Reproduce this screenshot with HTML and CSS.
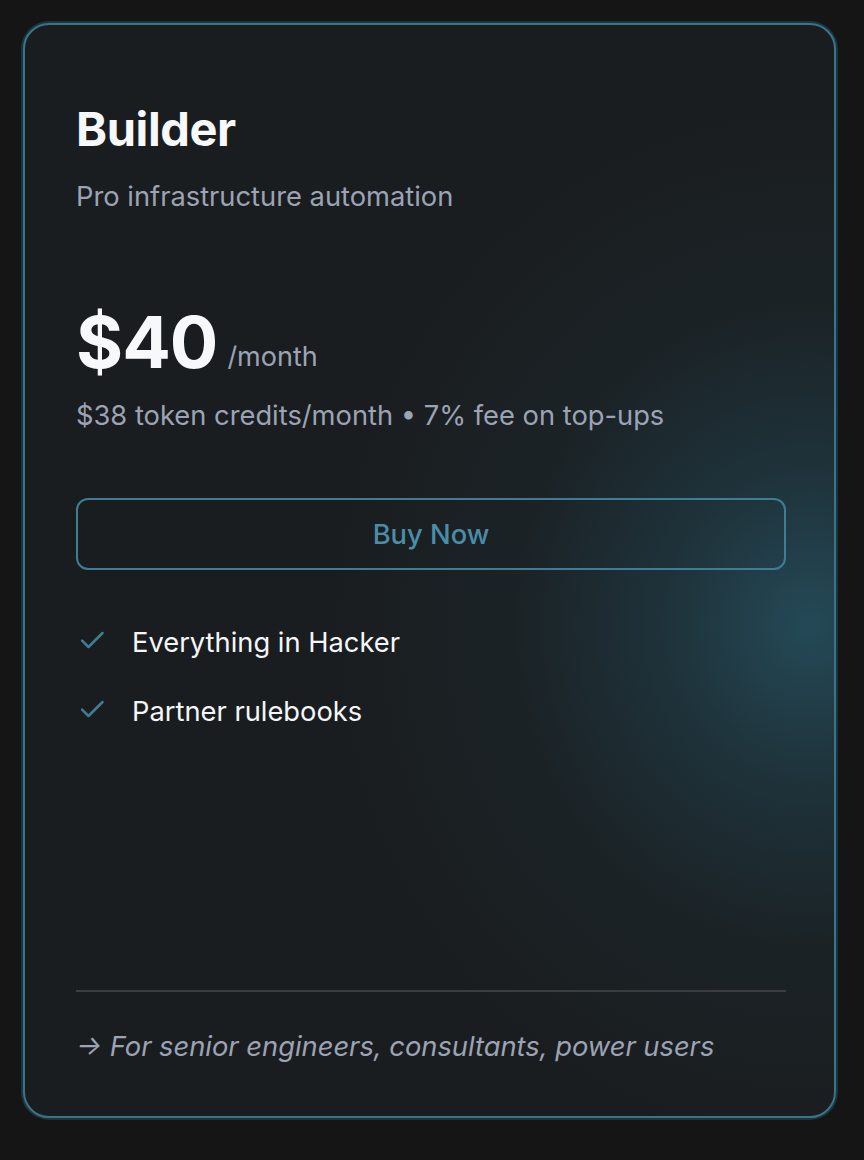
FILE: index.html
```html
<!DOCTYPE html>
<html lang="en">
<head>
<meta charset="utf-8">
<title>Builder plan</title>
<link rel="stylesheet" href="styles.css">
</head>
<body>
<div class="page">
  <section class="card">
    <h2 class="plan-name">Builder</h2>
    <p class="plan-desc">Pro infrastructure automation</p>
    <div class="price-row">
      <span class="price">$40</span>
      <span class="period">/month</span>
    </div>
    <p class="credits">$38 token credits/month • 7% fee on top-ups</p>
    <button class="buy">Buy Now</button>
    <ul class="features">
      <li class="feature">
        <svg class="check" viewBox="0 0 24 24" width="28" height="28" aria-hidden="true"><path d="M3.5 12.5 L9 18 L21 6" fill="none" stroke="currentColor" stroke-width="2.2" stroke-linecap="round" stroke-linejoin="round"/></svg>
        <span>Everything in Hacker</span>
      </li>
      <li class="feature">
        <svg class="check" viewBox="0 0 24 24" width="28" height="28" aria-hidden="true"><path d="M3.5 12.5 L9 18 L21 6" fill="none" stroke="currentColor" stroke-width="2.2" stroke-linecap="round" stroke-linejoin="round"/></svg>
        <span>Partner rulebooks</span>
      </li>
    </ul>
    <div class="footer">
      <p class="audience">→ For senior engineers, consultants, power users</p>
    </div>
  </section>
</div>
</body>
</html>
```

FILE: styles.css
```css
* { box-sizing: border-box; }
html, body {
  margin: 0;
  padding: 0;
  background: #151515;
}
body {
  font-family: Inter, "Noto Sans", sans-serif;
  width: 864px;
  height: 1160px;
}
.page {
  padding: 23px 28px 0 23px;
}
.card {
  width: 813px;
  height: 1095px;
  border: 2px solid #3b7387;
  border-radius: 26px;
  box-shadow: 0 0 0 2px #1b3540;
  background:
    radial-gradient(ellipse 480px 520px at 97% 55%, rgba(40, 90, 108, 0.72) 0, rgba(36, 76, 92, 0.45) 30%, rgba(30, 56, 66, 0.2) 62%, rgba(26, 30, 32, 0) 100%),
    #1a1d1f;
  padding: 76px 48px 0 51px;
  display: flex;
  flex-direction: column;
}
.plan-name {
  margin: 0;
  font-size: 47px;
  line-height: 56px;
  font-weight: 700;
  color: #f6f8fa;
  letter-spacing: -0.4px;
}
.plan-desc {
  margin: 22px 0 0;
  font-size: 27.3px;
  line-height: 36px;
  color: #9ca3b4;
}
.price-row {
  margin-top: 87px;
  display: flex;
  align-items: baseline;
  gap: 10px;
}
.price {
  font-size: 72px;
  line-height: 80px;
  font-weight: 700;
  color: #f6f8fa;
  letter-spacing: -1px;
}
.period {
  font-size: 27px;
  color: #9ca3b4;
  position: relative;
  top: -2px;
}
.credits {
  margin: 16px 0 0;
  font-size: 27.3px;
  line-height: 36px;
  color: #9ca3b4;
}
.buy {
  margin-top: 64px;
  width: 100%;
  height: 72px;
  background: transparent;
  border: 2px solid #3d7d95;
  border-radius: 12px;
  color: #4a8da8;
  font-family: Inter, "Noto Sans", sans-serif;
  font-size: 27.3px;
  font-weight: 500;
}
.features {
  list-style: none;
  margin: 55px 0 0;
  padding: 0;
  display: flex;
  flex-direction: column;
  gap: 33px;
}
.feature {
  display: flex;
  align-items: center;
  gap: 26px;
  font-size: 27.3px;
  line-height: 36px;
  color: #f4f6f8;
}
.check {
  color: #3f7c92;
  flex: none;
  margin-left: 2px;
  margin-top: -6px;
}
.footer {
  margin-top: auto;
  border-top: 2px solid #3a3e40;
  padding: 37px 0 0;
  height: 126px;
}
.audience {
  margin: 0;
  font-size: 27.3px;
  line-height: 36px;
  font-style: italic;
  color: #9ca3b4;
}
```
